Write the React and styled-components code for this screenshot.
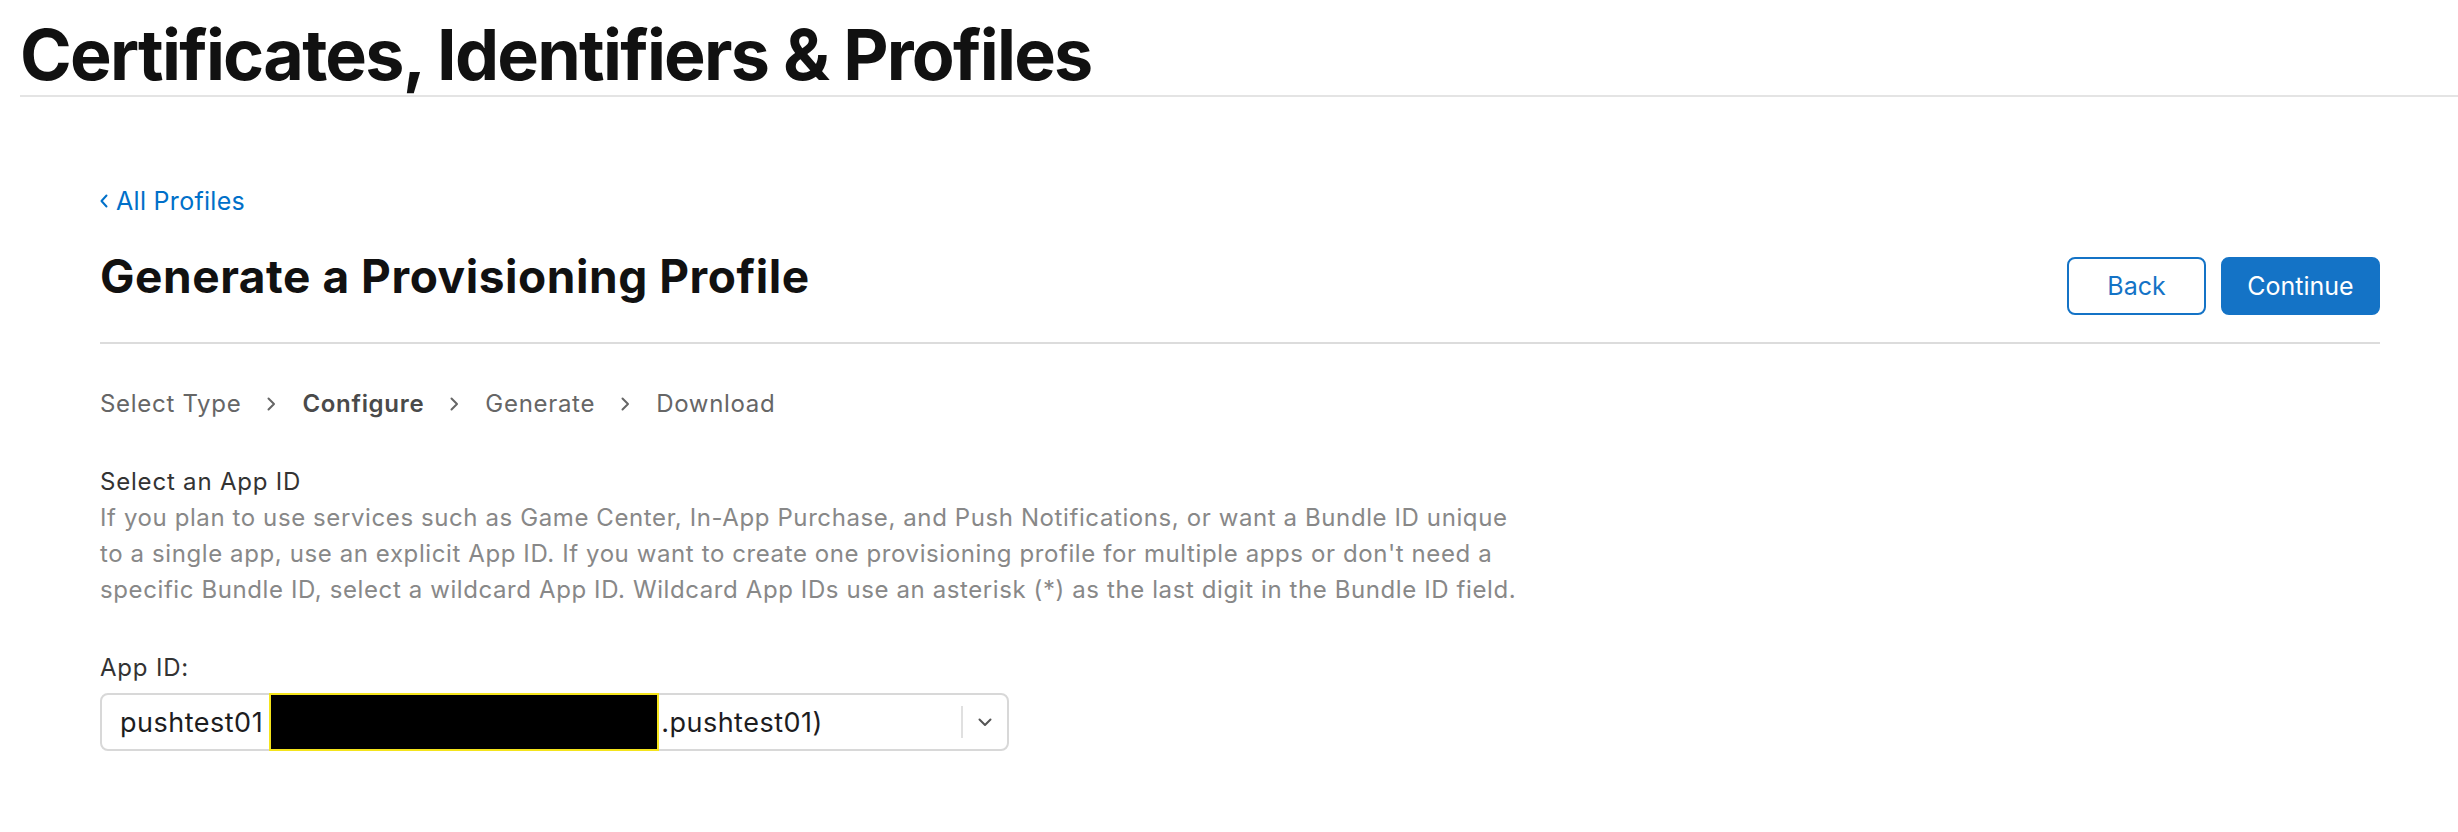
import React from 'react';
import styled, { createGlobalStyle } from 'styled-components';

const GlobalStyle = createGlobalStyle`
  body {
    margin: 0;
    background: #fff;
    font-family: Inter, 'Noto Sans', 'Liberation Sans', sans-serif;
    color: #1d1d1f;
  }
`

const Header = styled.header`
  margin-left: 20px;
  padding: 20px 0 5px;
  border-bottom: 2px solid #e4e4e4;
`

const SiteTitle = styled.h1`
  margin: 0;
  font-size: 70px;
  line-height: 70px;
  font-weight: 700;
  color: #111;
  letter-spacing: -1.75px;
`

const Main = styled.main`
  padding: 0 78px 0 100px;
`

const BackLink = styled.a`
  display: inline-flex;
  align-items: center;
  gap: 8px;
  margin-top: 86px;
  font-size: 25px;
  line-height: 36px;
  letter-spacing: 0.3px;
  color: #0070c9;
  text-decoration: none;
  cursor: pointer;
`

const HeadingRow = styled.div`
  display: flex;
  justify-content: space-between;
  align-items: flex-start;
  margin-top: 30px;
  padding-bottom: 27px;
  border-bottom: 2px solid #dcdcdc;
`

const PageTitle = styled.h2`
  margin: 0;
  font-size: 46px;
  line-height: 54px;
  font-weight: 700;
  color: #111;
  letter-spacing: 0.55px;
`

const Actions = styled.div`
  display: flex;
  gap: 15px;
  margin-top: 8px;
`

const Button = styled.button`
  height: 58px;
  width: ${({ $width }) => $width}px;
  border-radius: 8px;
  border: 2px solid #1473c6;
  background: ${({ $primary }) => ($primary ? '#1473c6' : '#fff')};
  color: ${({ $primary }) => ($primary ? '#fff' : '#1473c6')};
  font-family: inherit;
  font-size: 25px;
  cursor: pointer;
`

const Steps = styled.nav`
  display: flex;
  align-items: center;
  gap: 26px;
  margin-top: 44px;
  font-size: 24px;
  line-height: 32px;
  letter-spacing: 0.7px;
  color: #666;
`

const Step = styled.span`
  font-weight: ${({ $active }) => ($active ? 600 : 400)};
  color: ${({ $active }) => ($active ? '#4a4a4a' : '#666')};
`

const Section = styled.section`
  margin-top: 44px;
`

const Label = styled.div`
  font-size: 24px;
  line-height: 36px;
  letter-spacing: 0.8px;
  color: #333;
`

const Help = styled.p`
  margin: 0;
  font-size: 24px;
  line-height: 36px;
  letter-spacing: 0.6px;
  color: #888;
  white-space: nowrap;
`

const FieldLabel = styled(Label)`
  margin-top: 42px;
`

const Select = styled.div`
  display: flex;
  align-items: center;
  width: 909px;
  height: 58px;
  margin-top: 7px;
  box-sizing: border-box;
  border: 2px solid #d8d8d8;
  border-radius: 8px;
  padding-left: 18px;
  font-size: 27px;
  letter-spacing: 0.5px;
  color: #1d1d1f;
`

const Redacted = styled.span`
  align-self: stretch;
  width: 390px;
  margin: -2px 2px -2px 6px;
  background: #000;
  box-sizing: border-box;
  border: 2px solid #f4e41c;
`

const Indicator = styled.div`
  display: flex;
  align-items: center;
  margin-left: auto;
  height: 100%;
`

const Separator = styled.span`
  width: 2px;
  height: 32px;
  background: #e0e0e0;
`

const Caret = styled.span`
  display: flex;
  justify-content: center;
  width: 44px;
`

const Chevron = () => (
  <svg width="9" height="14" viewBox="0 0 9 14">
    <polyline points="1.5,1.5 7,7 1.5,12.5" fill="none" stroke="#666" strokeWidth="2" strokeLinecap="round" strokeLinejoin="round" />
  </svg>
)

const App = () => (
  <>
    <GlobalStyle />
    <Header>
      <SiteTitle>Certificates, Identifiers &amp; Profiles</SiteTitle>
    </Header>
    <Main>
      <BackLink>
        <svg width="8" height="14" viewBox="0 0 8 14">
          <polyline points="6.5,1.5 1.5,7 6.5,12.5" fill="none" stroke="#0070c9" strokeWidth="2" strokeLinecap="round" strokeLinejoin="round" />
        </svg>
        All Profiles
      </BackLink>

      <HeadingRow>
        <PageTitle>Generate a Provisioning Profile</PageTitle>
        <Actions>
          <Button $width={139}>Back</Button>
          <Button $width={159} $primary>Continue</Button>
        </Actions>
      </HeadingRow>

      <Steps>
        <Step>Select Type</Step>
        <Chevron />
        <Step $active>Configure</Step>
        <Chevron />
        <Step>Generate</Step>
        <Chevron />
        <Step>Download</Step>
      </Steps>

      <Section>
        <Label>Select an App ID</Label>
        <Help>
          If you plan to use services such as Game Center, In-App Purchase, and Push Notifications, or want a Bundle ID unique
          <br />
          to a single app, use an explicit App ID. If you want to create one provisioning profile for multiple apps or don't need a
          <br />
          specific Bundle ID, select a wildcard App ID. Wildcard App IDs use an asterisk (*) as the last digit in the Bundle ID field.
        </Help>

        <FieldLabel>App ID:</FieldLabel>
        <Select>
          pushtest01
          <Redacted />
          .pushtest01)
          <Indicator>
            <Separator />
            <Caret>
              <svg width="14" height="9" viewBox="0 0 14 9">
                <polyline points="1.5,1.5 7,7 12.5,1.5" fill="none" stroke="#555" strokeWidth="2" strokeLinecap="round" strokeLinejoin="round" />
              </svg>
            </Caret>
          </Indicator>
        </Select>
      </Section>
    </Main>
  </>
)

export default App
